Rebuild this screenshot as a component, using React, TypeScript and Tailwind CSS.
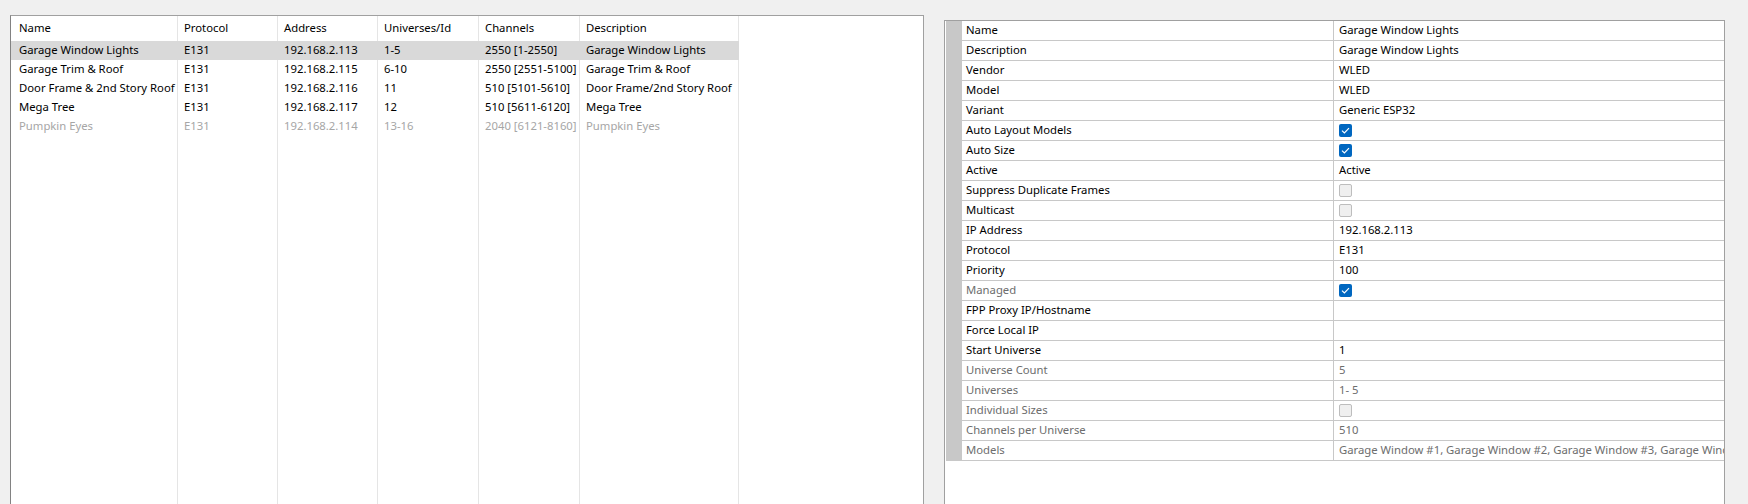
const cols = [
  { key: "name", label: "Name", w: "w-[167px]", pl: "pl-[8px]" },
  { key: "protocol", label: "Protocol", w: "w-[100px]", pl: "pl-[6px]" },
  { key: "address", label: "Address", w: "w-[100px]", pl: "pl-[6px]" },
  { key: "universes", label: "Universes/Id", w: "w-[101px]", pl: "pl-[6px]" },
  { key: "channels", label: "Channels", w: "w-[101px]", pl: "pl-[6px]" },
  { key: "description", label: "Description", w: "w-[159px]", pl: "pl-[6px]" },
]

const controllers = [
  { name: "Garage Window Lights", protocol: "E131", address: "192.168.2.113", universes: "1-5", channels: "2550 [1-2550]", description: "Garage Window Lights", selected: true },
  { name: "Garage Trim & Roof", protocol: "E131", address: "192.168.2.115", universes: "6-10", channels: "2550 [2551-5100]", description: "Garage Trim & Roof" },
  { name: "Door Frame & 2nd Story Roof", protocol: "E131", address: "192.168.2.116", universes: "11", channels: "510 [5101-5610]", description: "Door Frame/2nd Story Roof" },
  { name: "Mega Tree", protocol: "E131", address: "192.168.2.117", universes: "12", channels: "510 [5611-6120]", description: "Mega Tree" },
  { name: "Pumpkin Eyes", protocol: "E131", address: "192.168.2.114", universes: "13-16", channels: "2040 [6121-8160]", description: "Pumpkin Eyes", inactive: true },
]

type Prop = { label: string; value?: string; check?: boolean; disabled?: boolean }

const props: Prop[] = [
  { label: "Name", value: "Garage Window Lights" },
  { label: "Description", value: "Garage Window Lights" },
  { label: "Vendor", value: "WLED" },
  { label: "Model", value: "WLED" },
  { label: "Variant", value: "Generic ESP32" },
  { label: "Auto Layout Models", check: true },
  { label: "Auto Size", check: true },
  { label: "Active", value: "Active" },
  { label: "Suppress Duplicate Frames", check: false },
  { label: "Multicast", check: false },
  { label: "IP Address", value: "192.168.2.113" },
  { label: "Protocol", value: "E131" },
  { label: "Priority", value: "100" },
  { label: "Managed", check: true, disabled: true },
  { label: "FPP Proxy IP/Hostname", value: "" },
  { label: "Force Local IP", value: "" },
  { label: "Start Universe", value: "1" },
  { label: "Universe Count", value: "5", disabled: true },
  { label: "Universes", value: "1- 5", disabled: true },
  { label: "Individual Sizes", check: false, disabled: true },
  { label: "Channels per Universe", value: "510", disabled: true },
  { label: "Models", value: "Garage Window #1, Garage Window #2, Garage Window #3, Garage Window #4, Garage Window #5", disabled: true },
]

function CheckBox({ checked }: { checked: boolean }) {
  if (checked) {
    return (
      <div className="w-[13px] h-[13px] rounded-[2px] bg-[#0067c0] flex items-center justify-center">
        <svg width="9" height="7" viewBox="0 0 9 7" fill="none">
          <path d="M1 3.6 L3.4 6 L8 1.2" stroke="white" strokeWidth="1.2" />
        </svg>
      </div>
    )
  }
  return <div className="w-[13px] h-[13px] rounded-[2px] bg-[#efefef] border border-[#bdbdbd]"></div>
}

export default function App() {
  return (
    <div className="h-screen w-full bg-[#f0f0f0] flex items-stretch pl-[10px] gap-[20px] text-[11.3px] text-black overflow-hidden" style={{ fontFamily: '"Segoe UI", "Noto Sans", sans-serif' }}>
      {/* controller list */}
      <div className="mt-[15px] w-[914px] bg-white border-t border-[#a0a0a0] border-l border-l-[#828282] border-r border-r-[#a0a0a0] flex flex-col">
        <div className="flex h-[25px] shrink-0">
          {cols.map((c) => (
            <div key={c.key} className={`${c.w} ${c.pl} border-r border-[#e5e5e5] flex items-center`}>{c.label}</div>
          ))}
        </div>
        {controllers.map((r) => (
          <div key={r.name} className={`flex h-[19px] shrink-0 ${r.inactive ? "text-[#a6a6a6]" : ""}`}>
            {cols.map((c) => (
              <div key={c.key} className={`${c.w} ${c.pl} border-r flex items-center whitespace-nowrap overflow-hidden ${r.selected ? "bg-[#d9d9d9] border-[#d9d9d9]" : "border-[#e5e5e5]"}`}>
                {(r as any)[c.key]}
              </div>
            ))}
          </div>
        ))}
        <div className="flex flex-1">
          {cols.map((c) => (
            <div key={c.key} className={`${c.w} border-r border-[#e5e5e5]`}></div>
          ))}
        </div>
      </div>

      {/* property grid */}
      <div className="mt-[20px] w-[781px] bg-white border border-b-0 border-[#a0a0a0] pl-px">
        <div className="flex">
          <div className="w-[16px] bg-[#c8c8c8] shrink-0"></div>
          <div className="flex-1 min-w-0">
            {props.map((p) => (
              <div key={p.label} className={`flex h-[20px] border-b border-[#c8c8c8] ${p.disabled ? "text-[#6d6d6d]" : ""}`}>
                <div className="w-[372px] pl-[4px] border-r border-[#c8c8c8] flex items-center shrink-0">{p.label}</div>
                <div className="flex-1 min-w-0 pl-[5px] flex items-center whitespace-nowrap overflow-hidden">
                  {p.check !== undefined ? <CheckBox checked={p.check} /> : p.value}
                </div>
              </div>
            ))}
          </div>
        </div>
      </div>
    </div>
  )
}
